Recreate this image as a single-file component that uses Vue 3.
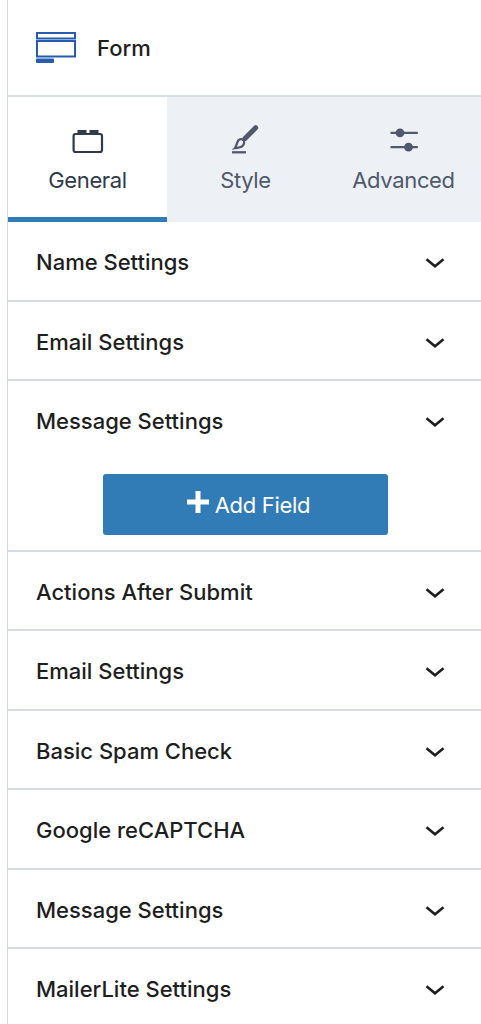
<script setup>
const tabs = [
  { name: 'General', icon: 'block' },
  { name: 'Style', icon: 'brush' },
  { name: 'Advanced', icon: 'sliders' },
]
const panels = [
  { title: 'Name Settings' },
  { title: 'Email Settings' },
  { title: 'Message Settings', action: 'Add Field' },
  { title: 'Actions After Submit' },
  { title: 'Email Settings' },
  { title: 'Basic Spam Check' },
  { title: 'Google reCAPTCHA' },
  { title: 'Message Settings' },
  { title: 'MailerLite Settings' },
]
</script>

<template>
  <aside class="sidebar">
    <header class="head">
      <svg class="form-icon" width="40" height="32" viewBox="0 0 40 32" fill="none" stroke="#255cad" stroke-width="2">
        <rect x="1" y="1" width="38" height="5.5" />
        <rect x="1" y="9" width="38" height="15.5" />
        <rect x="0" y="26.5" width="18" height="4.600" rx="1" fill="#255cad" stroke="none" />
      </svg>
      <span class="head-title">Form</span>
    </header>

    <nav class="tabs">
      <button v-for="(tab, i) in tabs" :key="tab.name" class="tab" :class="{ active: i === 0 }">
        <svg v-if="tab.icon === 'block'" class="tab-icon" width="32" height="32" viewBox="0 0 32 32">
          <rect x="1.600" y="11" width="28.400" height="18" rx="2" fill="none" stroke="currentColor" stroke-width="2.200" />
          <path d="M5.500 7h9v4h-9zM17.500 7h9v4h-9z" fill="currentColor" />
        </svg>
        <svg v-else-if="tab.icon === 'brush'" class="tab-icon" width="32" height="32" viewBox="0 0 32 32" fill="none" stroke="currentColor">
          <path d="M25.700 4.700L15 15.400" stroke-width="5" stroke-linecap="round" />
          <path d="M4.800 25.200c1.600-1.600 2-5.600 3.600-8 1.300-1.500 3.700-1.500 5-.1 1.300 1.700.8 4.200-.8 5.700-1.800 1.600-4.600 2-7.800 2.400z" stroke-width="2.300" />
          <path d="M2 29.300h14" stroke-width="2.300" />
        </svg>
        <svg v-else class="tab-icon" width="32" height="32" viewBox="0 0 32 32" fill="currentColor" stroke="currentColor">
          <path d="M2.500 9.800h27.300M2.500 24.200h27.300" stroke-width="2.300" />
          <circle cx="12" cy="9.800" r="4.400" stroke="none" />
          <circle cx="20.500" cy="24.200" r="4.400" stroke="none" />
        </svg>
        <span class="tab-label">{{ tab.name }}</span>
      </button>
    </nav>

    <section v-for="(panel, i) in panels" :key="i" class="panel">
      <div class="panel-head">
        <span class="panel-title">{{ panel.title }}</span>
        <svg class="chevron" width="20" height="12" viewBox="0 0 20 12" fill="none" stroke="#1e1e1e" stroke-width="2.500">
          <path d="M1.500 2.200L10 9.300L18.500 2.200" />
        </svg>
      </div>
      <button v-if="panel.action" class="add">
        <svg class="plus" width="22" height="22" viewBox="0 0 22 22" fill="none" stroke="#fff" stroke-width="5">
          <path d="M11 0v22M0 11h22" />
        </svg>
        <span>{{ panel.action }}</span>
      </button>
    </section>
  </aside>
</template>

<style>
body {
  background: #fff;
  overflow: hidden;
}
</style>

<style scoped>
.sidebar {
  box-sizing: border-box;
  height: 1024px;
  margin-left: 7px;
  overflow: hidden;
  border-left: 1px solid #d5d8dc;
  background: #fff;
  color: #1e1e1e;
  font-family: Inter, "Liberation Sans", sans-serif;
  font-size: 22px;
}
.head {
  box-sizing: border-box;
  height: 97px;
  display: flex;
  align-items: center;
  gap: 21px;
  padding: 1px 28px 0;
  border-bottom: 2px solid #d6dce4;
}
.head-title {
  font-weight: 500;
}
.tabs {
  display: grid;
  grid-template-columns: 159px 157px 1fr;
  height: 125px;
}
.tab {
  display: flex;
  flex-direction: column;
  align-items: center;
  margin: 0;
  padding: 26px 0 0;
  border: 0;
  border-bottom: 5px solid #edf0f5;
  background: #edf0f5;
  color: #4f596b;
  font: inherit;
  letter-spacing: -0.350px;
}
.tab.active {
  background: #fff;
  border-bottom-color: #317cb6;
  color: #2f3a4a;
}
.tab:last-child {
  padding-left: 2px;
}
.tab-icon {
  flex: none;
}
.tab-label {
  margin-top: 12px;
  line-height: 27px;
}
.panel {
  border-bottom: 2px solid #d6dce5;
}
.panel-head {
  box-sizing: border-box;
  display: flex;
  align-items: center;
  justify-content: space-between;
  height: 77.500px;
  padding: 3px 36px 0 28px;
}
.panel-title {
  font-weight: 500;
}
.chevron {
  margin-top: 2px;
}
.add {
  display: flex;
  align-items: center;
  justify-content: center;
  gap: 6px;
  width: 285px;
  height: 61px;
  margin: 15px 0 15px 95px;
  padding: 2px 0 0 6px;
  border: 0;
  border-radius: 3px;
  background: #317cb6;
  color: #fff;
  font: inherit;
  letter-spacing: -0.300px;
}
.plus {
  margin-bottom: 6px;
}
</style>
